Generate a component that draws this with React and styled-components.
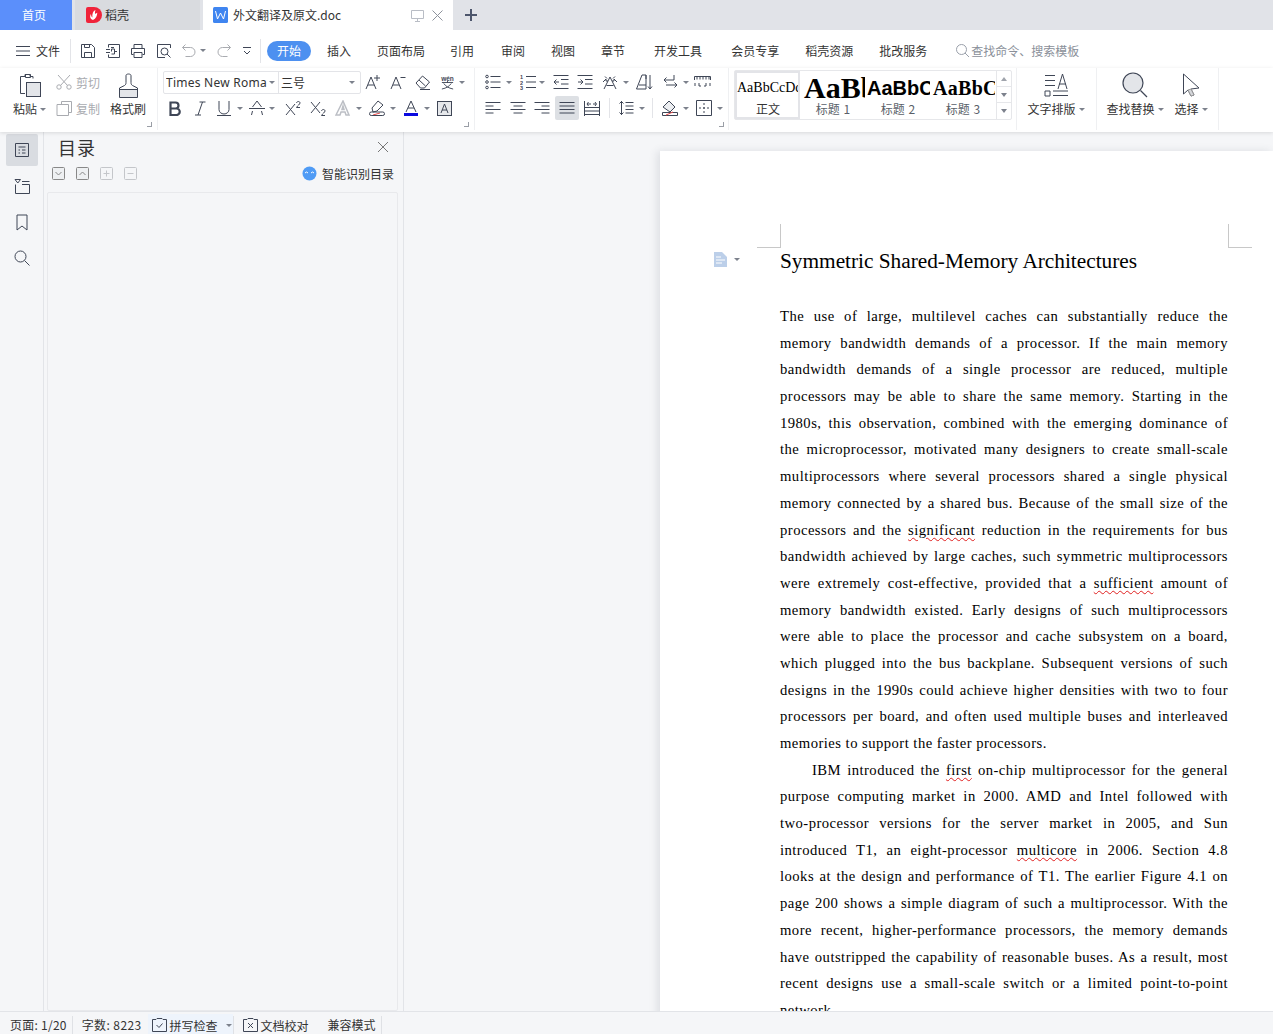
import React from "react";
import styled, { createGlobalStyle } from "styled-components";

const Global = createGlobalStyle`
  html, body { margin: 0; padding: 0; background: #f5f6f8; }
  * { box-sizing: border-box; }
  body { font-family: "Noto Sans CJK SC", "Noto Sans", sans-serif; font-size: 12px; color: #333; }
`;

const INK = "#3f4656";

const Page = styled.div`
  width: 1273px; height: 1034px; display: flex; flex-direction: column; overflow: hidden;
`;
const TabBar = styled.div`
  height: 30px; background: #e1e3e8; display: flex; align-items: stretch; flex: none;
`;
const Tab = styled.div`
  width: ${p => p.$w}px; margin-right: ${p => p.$mr || 0}px;
  background: ${p => p.$bg}; color: ${p => p.$fg || "#333"};
  display: flex; align-items: center; padding-left: ${p => p.$pl}px; gap: ${p => p.$gap || 4}px; line-height: 30px;
`;
const TabTools = styled.div`
  margin-left: auto; display: flex; align-items: center; gap: 8px; padding-right: 10px;
`;
const PlusBtn = styled.div`
  margin-left: 12px; display: flex; align-items: center;
`;
const MenuBar = styled.div`
  height: 38px; background: #fff; display: flex; align-items: center; padding: 3px 0 0 16px; flex: none; line-height: 20px;
`;
const VSep = styled.div`
  width: 1px; height: ${p => p.$h || 24}px; background: #e3e4e8; margin: 0 ${p => p.$mr || 0}px 0 ${p => p.$ml || 0}px; flex: none;
`;
const QuickBtn = styled.div`
  display: flex; align-items: center; margin-left: ${p => p.$ml || 0}px; flex: none; gap: 3px;
`;
const MenuFile = styled.span`
  margin-left: 6px;
`;
const MenuTab = styled.span`
  margin-left: ${p => p.$ml}px; flex: none;
`;
const ActiveTab = styled.span`
  width: 44px; height: 20px; border-radius: 10px; background: #4d90f0; color: #fff; text-align: center; line-height: 20px; margin-left: 6px; flex: none;
`;
const SearchHint = styled.div`
  margin-left: 28px; display: flex; align-items: center; gap: 1px; color: #8a8f99;
`;
const Ribbon = styled.div`
  height: 64px; background: #fff; display: flex; flex: none; box-shadow: 0 1px 4px rgba(0,0,0,.12); position: relative; z-index: 2;
`;
const Group = styled.div`
  position: relative; width: ${p => p.$w}px; flex: none; border-right: 1px solid #eff0f2;
  padding: 2px 0 0 ${p => p.$pl || 0}px; display: flex; height: 62px;
`;
const ToolRows = styled.div`
  display: flex; flex-direction: column; gap: 2px; width: 100%;
`;
const Corner = styled.div`
  position: absolute; right: ${p => p.$r}px; bottom: 3px; width: 5px; height: 5px;
  border-right: 1px solid #9a9ea6; border-bottom: 1px solid #9a9ea6;
`;
const BigBtn = styled.div`
  width: ${p => p.$w}px; margin-left: ${p => p.$ml || 0}px; display: flex; flex-direction: column; align-items: center; flex: none;
`;
const BigIcon = styled.div`
  height: 30px; display: flex; align-items: center; justify-content: center;
`;
const BigLabel = styled.div`
  height: 18px; line-height: 18px; display: flex; align-items: center; gap: 3px; white-space: nowrap;
`;
const SmallCol = styled.div`
  margin-left: 10px; width: 54px; display: flex; flex-direction: column; gap: 2px; flex: none;
`;
const SmallBtn = styled.div`
  height: 24px; display: flex; align-items: center; gap: 4px; color: #a9abb0;
`;
const Row = styled.div`
  height: 24px; display: flex; align-items: center; padding-left: ${p => p.$pl || 0}px; flex: none;
`;
const Tool = styled.div`
  width: ${p => p.$w}px; height: 24px; display: flex; align-items: center; gap: ${p => p.$gap || 5}px; flex: none;
`;
const ActiveTool = styled.div`
  width: 24px; height: 24px; background: #dde0e4; border-radius: 2px; display: flex; align-items: center; justify-content: center; margin-left: -4px; margin-right: 5px; flex: none;
`;
const Caret = styled.i`
  width: 0; height: 0; flex: none; border-left: 3px solid transparent; border-right: 3px solid transparent; border-top: 3px solid #7c818c; display: inline-block;
`;
const FontBox = styled.div`
  width: 198px; height: 23px; margin-left: -4px; margin-right: 4px; border: 1px solid #e3e4e8; border-radius: 2px; display: flex; align-items: center; flex: none;
`;
const FontName = styled.div`
  width: 115px; height: 21px; border-right: 1px solid #e3e4e8; display: flex; align-items: center; padding-left: 2px; gap: 2px;
  font-family: "Noto Sans", "Open Sans", sans-serif; font-size: 12px; letter-spacing: .25px;
`;
const FontNameText = styled.span`
  width: 101px; overflow: hidden; white-space: nowrap; flex: none;
`;
const FontSize = styled.div`
  flex: 1; display: flex; align-items: center; justify-content: space-between; padding: 0 5px 0 2px;
`;
const StyleBox = styled.div`
  width: 278px; height: 50px; margin-left: 5px; border: 1px solid #e6e7ea; border-radius: 2px; display: flex; flex: none;
`;
const StyleItem = styled.div`
  width: ${p => p.$w}px; height: 48px; flex: none; overflow: hidden; display: flex; flex-direction: column; align-items: center;
  border: ${p => p.$on ? "2px solid #e3e4e8" : "none"}; padding-top: ${p => p.$on ? 0 : 2}px; color: ${p => p.$on ? "#333" : "#5a5f69"};
`;
const StylePreview = styled.div`
  height: 28px; width: 100%; overflow: hidden; white-space: nowrap; line-height: 30px; text-align: left; padding-left: ${p => p.$pl || 0}px; color: #000;
  font-family: ${p => p.$sans ? '"Liberation Sans"' : '"Liberation Serif"'}, serif;
  font-size: ${p => p.$size}px; font-weight: ${p => p.$bold ? 700 : 400}; letter-spacing: ${p => p.$ls || 0}px;
`;
const StyleLabel = styled.div`
  line-height: 16px; height: 16px; word-spacing: 1px; padding-left: 1px;
`;
const Scroller = styled.div`
  margin-left: auto; width: 15px; border-left: 1px solid #e6e7ea; display: flex; flex-direction: column;
`;
const ScrollCell = styled.div`
  flex: 1; border-bottom: 1px solid ${p => p.$last ? "transparent" : "#e6e7ea"}; display: flex; align-items: center; justify-content: center;
`;
const UpCaret = styled.i`
  width: 0; height: 0; border-left: 3px solid transparent; border-right: 3px solid transparent; border-bottom: 4px solid #a0a4ac;
`;
const DownCaret = styled.i`
  width: 0; height: 0; border-left: 3px solid transparent; border-right: 3px solid transparent; border-top: 4px solid #7c818c;
`;
const Main = styled.div`
  flex: 1; min-height: 0; display: flex; overflow: hidden; background: #f5f6f8;
`;
const Rail = styled.div`
  width: 44px; flex: none; border-right: 1px solid #e2e4e8; display: flex; flex-direction: column; align-items: center; padding-top: 2px; gap: 4px;
`;
const RailItem = styled.div`
  width: 32px; height: 32px; border-radius: 2px; background: ${p => p.$on ? "#d9dce1" : "transparent"}; display: flex; align-items: center; justify-content: center;
`;
const Panel = styled.div`
  width: 360px; flex: none; border-right: 1px solid #e2e4e8; display: flex; flex-direction: column; padding: 0 5px 0 3px;
`;
const PanelHead = styled.div`
  height: 30px; display: flex; align-items: center; justify-content: space-between; padding: 0 10px 0 11px; flex: none;
`;
const PanelTitle = styled.div`
  font-size: 18px; line-height: 26px; color: #333; letter-spacing: 1px;
`;
const PanelTools = styled.div`
  height: 30px; display: flex; align-items: center; padding: 0 4px 8px 5px; gap: 11px; flex: none;
`;
const SmartLink = styled.div`
  margin-left: auto; display: flex; align-items: center; gap: 5px;
`;
const TreeBox = styled.div`
  flex: 1; border: 1px solid #e8e9ec; border-radius: 2px;
`;
const DocArea = styled.div`
  flex: 1; min-width: 0; padding: 19px 0 0 256px; overflow: hidden;
`;
const Sheet = styled.div`
  position: relative; width: 613px; height: 900px; background: #fff; box-shadow: -3px 0 8px rgba(60,65,80,.12);
  padding: 97px 45px 0 120px; color: #000; font-family: "Liberation Serif", "Times New Roman", serif; overflow: hidden;
`;
const CropMark = styled.div`
  position: absolute; top: 73px; width: 24px; height: 24px; border-bottom: 1px solid #c8c8c8;
  ${p => p.$side === "left" ? "left: 97px; border-right: 1px solid #c8c8c8;" : "left: 568px; border-left: 1px solid #c8c8c8;"}
`;
const ParaMark = styled.div`
  position: absolute; left: 54px; top: 101px; display: flex; align-items: center; gap: 7px;
`;
const DocTitle = styled.h1`
  margin: 0 0 28px; font-size: 21.33px; line-height: 27px; font-weight: 400; white-space: nowrap; letter-spacing: -.02px;
`;
const DocLine = styled.div`
  font-size: 14.67px; line-height: 26.7px; height: 26.7px; white-space: nowrap; letter-spacing: .46px;
  text-align: justify; text-align-last: ${p => p.$end ? "left" : "justify"};
  padding-left: ${p => p.$indent ? 32 : 0}px;
`;
const Spell = styled.span`
  text-decoration: underline wavy #e02020 1px; text-underline-offset: 2px;
`;
const StatusBar = styled.div`
  height: 23px; flex: none; background: #f5f6f8; border-top: 1px solid #e2e4e8; display: flex; align-items: flex-end; padding-left: 10px; position: relative; z-index: 3;
`;
const StatusText = styled.span`
  height: 20px; line-height: 18px; padding-top: 2px; margin-right: ${p => p.$mr || 0}px; white-space: nowrap; letter-spacing: ${p => p.$ls || 0}px; flex: none;
`;
const StatusSep = styled.div`
  width: 1px; height: 18px; background: #dfe1e5; margin-right: ${p => p.$mr || 0}px; flex: none;
`;
const SpellBtn = styled.div`
  width: 85px; height: 20px; padding: 2px 0 0 4px; background: #eef4fc; display: flex; align-items: center; gap: 3px; flex: none;
`;
const CaretGap = styled.span`
  width: 2px; flex: none;
`;
const CheckBtn = styled.div`
  height: 20px; padding-top: 2px; display: flex; align-items: center; gap: 3px; margin: 0 19px 0 9px; flex: none;
`;

const Svg = ({ w = 16, h = 16, vw, vh, c = INK, sw = 1, children }) => (
  <svg width={w} height={h} viewBox={`0 0 ${vw || w} ${vh || h}`} fill="none" stroke={c} strokeWidth={sw} style={{ display: "block", flex: "none" }}>{children}</svg>
);
const G = "#a9abb0";

const I = {
  burger: <Svg w={14} h={12}><path d="M0 1.5h14M0 6h14M0 10.500h14"/></Svg>,
  save: <Svg><path d="M1.500 1.500h10l3 3v10h-13z"/><path d="M4.500 14.500v-5h7v5M4.500 1.500v3h5v-3"/></Svg>,
  saveas: <Svg><path d="M3.500 4.500v-3h11v13h-11v-3M1 6.500h4M1 9.500h4"/><path d="M6.500 8.500v-2.500h3v5h-3M9.500 8.500h2.500M6 4.500h3"/></Svg>,
  print: <Svg><path d="M4 5V1.500h8V5M3.500 11.500h-2v-6h13v6h-2"/><path d="M4 9.500h8v5H4z"/></Svg>,
  preview: <Svg><path d="M14.500 5V1.500h-13v13H9"/><circle cx="8.500" cy="8.500" r="3.500"/><path d="M11 11l3.500 3.500" /></Svg>,
  undo: <Svg c={G}><path d="M4.500 1.500L1.500 4.500l3 3M1.500 4.500h8a4.500 4.500 0 010 9h-5"/></Svg>,
  redo: <Svg c={G}><path d="M11.500 1.500l3 3-3 3M14.500 4.500h-8a4.500 4.500 0 000 9h5"/></Svg>,
  more: <Svg w={10} h={10}><path d="M1 1.500h8M2 5l3 3 3-3"/></Svg>,
  search: <Svg w={15} h={15} c="#9aa0aa"><circle cx="6.500" cy="6.500" r="5"/><path d="M10 10l4 4"/></Svg>,
  monitor: <Svg w={13} h={13} c="#b9bdc5"><path d="M.5 1.500h12v8H.5zM6.500 9.500v3M4 12.500h5"/></Svg>,
  close: <Svg w={11} h={11} c="#8d929c"><path d="M.5.5l10 10M10.500.5l-10 10"/></Svg>,
  plus: <Svg w={12} h={12} c="#4d566c" sw={2}><path d="M6 0v12M0 6h12"/></Svg>,
  wps: <svg width="15" height="16" viewBox="0 0 15 16" style={{ display: "block", flex: "none" }}><rect width="15" height="16" rx="1.500" fill="#3f85f0"/><path d="M2.500 4l2 8 3-6 3 6 2-8" fill="none" stroke="#fff" strokeWidth="1"/></svg>,
  daoke: <svg width="16" height="16" viewBox="0 0 16 16" style={{ display: "block", flex: "none" }}><path d="M0 2a2 2 0 012-2h6a8 8 0 010 16H2a2 2 0 01-2-2z" fill="#f0233a"/><path d="M7 13c-3-1-3.500-4-2-6 0 2 .6 3 1.400 3.600C6 7 7 4 9.500 3c-.8 2.500-.5 3.500 0 4 .7-.7 1-1 1.800-1.300-.2 3-1.300 6-4.300 7.300z" fill="#fff"/></svg>,
  paste: <svg width="22" height="25" viewBox="0 0 22 25" fill="none" stroke={INK} style={{ display: "block" }}><path d="M14 5.500V3.500h-3v-2H6v2H1.500v17H6"/><path d="M6.500 1.500h5v3h-5z"/><rect x="7.500" y="9.500" width="14" height="14" fill="#e3e5e9"/></svg>,
  cut: <Svg c={G}><circle cx="3" cy="13" r="2.200"/><circle cx="13" cy="13" r="2.200"/><path d="M4.500 11.500L14 1M11.500 11.500L2 1"/></Svg>,
  copy: <Svg c={G}><path d="M5.500 4.500v-3h10v11h-3"/><path d="M1 4.500h11.500v11H1z" fill="#fff"/></Svg>,
  brush: <svg width="19" height="25" viewBox="0 0 19 25" fill="none" stroke={INK} style={{ display: "block" }}><path d="M.5 16.500h18v8H.5z" fill="#e3e5e9"/><path d="M.5 24V15l5-2.500c1.500-1 1.500-2 1.500-3V2.500c0-2 5-2 5 0v7c0 1 0 2 1.500 3l5 2.500v9"/></svg>,
  aplus: <Svg w={16}><path d="M1 15L6 3l5 12M3 11h6M12 1v6M9 4h6"/></Svg>,
  aminus: <Svg w={16}><path d="M1 15L6 3l5 12M3 11h6M10.500 3.500h5"/></Svg>,
  eraser: <Svg><path d="M1 9l6.500-7 7 6-5 6H5.500z"/><path d="M4 6l6.500 6" /><path d="M5 15.500h10"/></Svg>,
  wen: <svg width="16" height="16" viewBox="0 0 16 16" style={{ display: "block" }}><text x="8" y="6.500" fontSize="7" fontFamily="Liberation Sans" fontWeight="700" fill={INK} textAnchor="middle">wén</text><path d="M2 8.500h12M8 7v2M4 9.500c2 3 5 5 10 6M12 9.500c-2 3-5 5-10 6" stroke={INK} fill="none"/></svg>,
  bold: <Svg sw={2.200}><path d="M3.500 2.500h5a3 3 0 010 6h-5zM3.500 8.500h6a3.200 3.200 0 010 6.500h-6z"/></Svg>,
  italic: <Svg><path d="M10.500 2L6 15M7.500 2h6M3 15h6" /></Svg>,
  underline: <Svg><path d="M3 1v8.500a5 4.500 0 0010 0V1M1 15.500h14"/></Svg>,
  strike: <Svg><path d="M3.500 7L8 1l4.500 6M0 8.500h16M3.500 11l-1 4M12.500 11l1 4" /></Svg>,
  sup: <Svg><path d="M1 4l9 11M10 4l-9 11"/><path d="M11.500 3c.3-2 3.500-2 3.500 0 0 1.300-2.500 2.500-3.500 4.500H15" /></Svg>,
  sub: <Svg><path d="M1 2l9 11M10 2l-9 11"/><path d="M11.500 11c.3-2 3.500-2 3.500 0 0 1.300-2.500 2.500-3.500 4.500H15" /></Svg>,
  aout: <Svg c="#bcbfc5" sw={1.500}><path d="M1 15L8 1l6 14h-3l-1-3H6l-1 3zM7 9.500h2L8 6z"/></Svg>,
  high: <Svg><path d="M3 8l6-7 5 4-6 6-4 1z"/><path d="M4 15l7-2" stroke="#e84b4b"/><rect x=".5" y="12" width="15" height="3.500" rx="1.700" /></Svg>,
  ablue: <svg width="16" height="16" viewBox="0 0 16 16" fill="none" stroke={INK} style={{ display: "block" }}><path d="M3 12L8 1l5 11M5 8h6"/><rect x="1" y="13" width="14" height="3" fill="#0a0ae0" stroke="none"/></svg>,
  abox: <Svg w={15} h={15}><rect x=".5" y=".5" width="14" height="14" fill="#e6e8eb"/><path d="M4 12L7.500 3 11 12M5 9h5"/></Svg>,
  bullets: <Svg><path d="M5.500 2.500h10M5.500 8h10M5.500 13.500h10"/><circle cx="2" cy="2.500" r="1.300"/><circle cx="2" cy="8" r="1.300"/><circle cx="2" cy="13.500" r="1.300"/></Svg>,
  numbers: <svg width="16" height="16" viewBox="0 0 16 16" fill="none" stroke={INK} style={{ display: "block" }}><path d="M6 2.500h10M6 8h10M6 13.500h10"/><text x="0" y="5" fontSize="5.500" fontWeight="700" fontFamily="Liberation Sans" fill={INK} stroke="none">1</text><text x="0" y="10.500" fontSize="5.500" fontWeight="700" fontFamily="Liberation Sans" fill={INK} stroke="none">2</text><text x="0" y="16" fontSize="5.500" fontWeight="700" fontFamily="Liberation Sans" fill={INK} stroke="none">3</text></svg>,
  outdent: <Svg><path d="M.5 1.500h15M8 5.500h7.500M8 10h7.500M.5 14.500h15M6 8H1M3.500 5.500L1 8l2.500 2.500"/></Svg>,
  indent: <Svg><path d="M.5 1.500h15M8 5.500h7.500M8 10h7.500M.5 14.500h15M1 8h5M3.500 5.500L6 8l-2.500 2.500"/></Svg>,
  layout: <Svg><path d="M1 8l3-3v2h2M15 8l-3-3v2h-2M8 3L2 15M8 3l6 12M4.500 11.500h7M3 2.500l2 2M13 2.500l-2 2"/></Svg>,
  sort: <Svg w={17} h={16}><path d="M.5 15L6 1h4v14zM3 11h7M10 5v-4"/><path d="M14 1v14M12 12.500l2 2.500 2-2.500"/></Svg>,
  lbreak: <Svg><path d="M12 1v5H2M4.500 3.500L2 6l2.500 2.500M4 11h11M12.500 8.500L15 11l-2.500 2.500"/></Svg>,
  ruler: <Svg w={17} h={16} vw={17} vh={16}><path d="M.5 6V2.500h16V6M3 2.500v3M6 2.500v3M9 2.500v3M12 2.500v3M15 2.500v3M1 9v3M5 9v3h2M10 12h2v-3M16 9v3"/></Svg>,
  left: <Svg><path d="M.5 2.500h15M.5 6h8M.5 9.500h15M.5 13h8"/></Svg>,
  center: <Svg><path d="M.5 2.500h15M3.500 6h9M.5 9.500h15M3.500 13h9"/></Svg>,
  right: <Svg><path d="M.5 2.500h15M7.500 6h8M.5 9.500h15M7.500 13h8"/></Svg>,
  justify: <Svg><path d="M.5 2.500h15M.5 6h15M.5 9.500h15M.5 13h15"/></Svg>,
  dist: <Svg><path d="M.5 1v15M15.500 1v15M.5 7.500h15M.5 11h15M.5 14.500h15M3 4h4M12 4H9M4.500 2L3 4l1.500 2M11 2l1.500 2L11 6"/></Svg>,
  spacing: <Svg><path d="M3.500 1v14M1.500 3.500l2-2 2 2M1.500 12.500l2 2 2-2M7.500 2.500h8M7.500 6h8M7.500 9.500h8M7.500 13h8"/></Svg>,
  shade: <Svg><path d="M1 7l6-6 6 6-5 5z" fill="#eceef1"/><path d="M.5 12.500h15v3H.5z" /><path d="M4 15l7-3" stroke="#e84b4b"/></Svg>,
  border: <Svg><path d="M.5.5h15v15H.5z"/><path d="M8 3v2M8 7v2M8 11v2M3 8h2M7 8h2M11 8h2"/></Svg>,
  txtlayout: <svg width="25" height="24" viewBox="0 0 25 24" fill="none" stroke={INK} style={{ display: "block" }}><path d="M1 2.500h10M1 7.500h10M1 12.500h10M14 16L18.500 1 23 16M15 11h7M1 18h5v5H1zM9 18h15M9 22.500h15"/></svg>,
  find: <svg width="26" height="26" viewBox="0 0 26 26" fill="none" stroke={INK} strokeWidth="1.200" style={{ display: "block" }}><circle cx="11" cy="11" r="10" fill="#e3e5e9"/><path d="M18.500 18.500l6.500 6.500"/></svg>,
  cursor: <svg width="17" height="25" viewBox="0 0 17 25" fill="none" stroke={INK} style={{ display: "block" }}><path d="M.5 1v20l4.500-4 3 6 3-1-3-6 8-1z" fill="#fff"/><path d="M5 17l3 6 3-1-3-6z" fill="#d5d7db" stroke="#999"/></svg>,
  outline: <Svg><path d="M1.500 1.500h13v13h-13zM4.500 5h7M8 8h3.500M8 11h3.500M4.500 8h1.500M4.500 11h1.500"/></Svg>,
  folder: <Svg w={16} h={16}><path d="M1.500 6.500v9h14v-9M8 6.500h7.500M8 3.500h7.500"/><path d="M1 1.500h5.500L3.800 5z" /></Svg>,
  bookmark: <Svg w={12} h={17}><path d="M1 1h10v15l-5-4-5 4z"/></Svg>,
  rsearch: <Svg><circle cx="6.500" cy="6.500" r="5.500"/><path d="M10.500 10.500l5 5"/></Svg>,
  x: <Svg w={10} h={10} c="#777"><path d="M0 0l10 10M10 0L0 10"/></Svg>,
  chkDown: <Svg w={13} h={13} c="#888"><rect x=".5" y=".5" width="12" height="12" rx="1" fill="#eef0f2"/><path d="M3.500 5l3 3 3-3"/></Svg>,
  chkUp: <Svg w={13} h={13} c="#888"><rect x=".5" y=".5" width="12" height="12" rx="1" fill="#eef0f2"/><path d="M3.500 8l3-3 3 3"/></Svg>,
  chkPlus: <Svg w={13} h={13} c="#c4c6ca"><rect x=".5" y=".5" width="12" height="12" rx="1"/><path d="M3.500 6.500h6M6.500 3.500v6"/></Svg>,
  chkMinus: <Svg w={13} h={13} c="#c4c6ca"><rect x=".5" y=".5" width="12" height="12" rx="1"/><path d="M3.500 6.500h6"/></Svg>,
  smart: <svg width="15" height="15" viewBox="0 0 15 15" style={{ display: "block", flex: "none" }}><circle cx="7.500" cy="7.500" r="7" fill="#4f9bf5"/><path d="M3 7l1.500-1L6 7M9 7l1.500-1L12 7" stroke="#fff" fill="none"/></svg>,
  paraMark: <svg width="13" height="15" viewBox="0 0 13 15" style={{ display: "block" }}><path d="M0 0h8l5 5v10H0z" fill="#bccfe9"/><path d="M2 5h5M2 8h9M2 11h6" stroke="#fff"/></svg>,
  spellChk: <Svg w={15} h={14}><path d="M.5 1.500h3.500l1-1h5l1 1h3.500v12H.5zM4.500 7l2.500 2.500 3.500-4"/></Svg>,
  docChk: <Svg w={15} h={14}><path d="M.5 1.500h3.500l1-1h5l1 1h3.500v12H.5zM5 5l5 5M10 5l-5 5"/></Svg>,
};

const ToolItem = ({ w, icon, caret, gap }) => (
  <Tool $w={w} $gap={gap}>{I[icon]}{caret && <Caret />}</Tool>
);

const LINES_A = [
  <>The use of large, multilevel caches can substantially reduce the</>,
  <>memory bandwidth demands of a processor. If the main memory</>,
  <>bandwidth demands of a single processor are reduced, multiple</>,
  <>processors may be able to share the same memory. Starting in the</>,
  <>1980s, this observation, combined with the emerging dominance of</>,
  <>the microprocessor, motivated many designers to create small-scale</>,
  <>multiprocessors where several processors shared a single physical</>,
  <>memory connected by a shared bus. Because of the small size of the</>,
  <>processors and the <Spell>significant</Spell> reduction in the requirements for bus</>,
  <>bandwidth achieved by large caches, such symmetric multiprocessors</>,
  <>were extremely cost-effective, provided that a <Spell>sufficient</Spell> amount of</>,
  <>memory bandwidth existed. Early designs of such multiprocessors</>,
  <>were able to place the processor and cache subsystem on a board,</>,
  <>which plugged into the bus backplane. Subsequent versions of such</>,
  <>designs in the 1990s could achieve higher densities with two to four</>,
  <>processors per board, and often used multiple buses and interleaved</>,
];
const LINES_B = [
  <>purpose computing market in 2000. AMD and Intel followed with</>,
  <>two-processor versions for the server market in 2005, and Sun</>,
  <>introduced T1, an eight-processor <Spell>multicore</Spell> in 2006. Section 4.8</>,
  <>looks at the design and performance of T1. The earlier Figure 4.1 on</>,
  <>page 200 shows a simple diagram of such a multiprocessor. With the</>,
  <>more recent, higher-performance processors, the memory demands</>,
  <>have outstripped the capability of reasonable buses. As a result, most</>,
  <>recent designs use a small-scale switch or a limited point-to-point</>,
];

export default function App() {
  return (
    <Page>
      <Global />
      <TabBar>
        <Tab $w={72} $mr={3} $bg="#5b8ffb" $fg="#fff" $pl={22}>首页</Tab>
        <Tab $w={125} $mr={3} $bg="#d9dbdf" $pl={11} $gap={3}>{I.daoke}稻壳</Tab>
        <Tab $w={250} $bg="#fff" $pl={10} $gap={5}>
          {I.wps}外文翻译及原文.doc
          <TabTools>{I.monitor}{I.close}</TabTools>
        </Tab>
        <PlusBtn>{I.plus}</PlusBtn>
      </TabBar>

      <MenuBar>
        {I.burger}
        <MenuFile>文件</MenuFile>
        <VSep $ml={10} />
        <QuickBtn $ml={9}>{I.save}</QuickBtn>
        <QuickBtn $ml={9}>{I.saveas}</QuickBtn>
        <QuickBtn $ml={9}>{I.print}</QuickBtn>
        <QuickBtn $ml={10}>{I.preview}</QuickBtn>
        <QuickBtn $ml={9}>{I.undo}<Caret /></QuickBtn>
        <QuickBtn $ml={10}>{I.redo}</QuickBtn>
        <QuickBtn $ml={10}>{I.more}</QuickBtn>
        <VSep $ml={8} />
        <ActiveTab>开始</ActiveTab>
        <MenuTab $ml={16}>插入</MenuTab>
        <MenuTab $ml={26}>页面布局</MenuTab>
        <MenuTab $ml={25}>引用</MenuTab>
        <MenuTab $ml={27}>审阅</MenuTab>
        <MenuTab $ml={26}>视图</MenuTab>
        <MenuTab $ml={26}>章节</MenuTab>
        <MenuTab $ml={29}>开发工具</MenuTab>
        <MenuTab $ml={29}>会员专享</MenuTab>
        <MenuTab $ml={26}>稻壳资源</MenuTab>
        <MenuTab $ml={26}>批改服务</MenuTab>
        <SearchHint>{I.search}查找命令、搜索模板</SearchHint>
      </MenuBar>

      <Ribbon>
        <Group $w={158} $pl={13}>
          <BigBtn $w={33}>
            <BigIcon>{I.paste}</BigIcon>
            <BigLabel>粘贴<Caret /></BigLabel>
          </BigBtn>
          <SmallCol>
            <SmallBtn>{I.cut}剪切</SmallBtn>
            <SmallBtn>{I.copy}复制</SmallBtn>
          </SmallCol>
          <BigBtn $w={36}>
            <BigIcon>{I.brush}</BigIcon>
            <BigLabel>格式刷</BigLabel>
          </BigBtn>
          <Corner $r={5} />
        </Group>

        <Group $w={317}>
          <ToolRows>
            <Row $pl={9}>
              <FontBox>
                <FontName><FontNameText>Times New Roman</FontNameText><Caret /></FontName>
                <FontSize>三号<Caret /></FontSize>
              </FontBox>
              <ToolItem w={25} icon="aplus" />
              <ToolItem w={25} icon="aminus" />
              <ToolItem w={25} icon="eraser" />
              <ToolItem w={25} icon="wen" caret gap={4} />
            </Row>
            <Row $pl={9}>
              <ToolItem w={25} icon="bold" />
              <ToolItem w={24} icon="italic" />
              <ToolItem w={33} icon="underline" caret />
              <ToolItem w={36} icon="strike" caret gap={4} />
              <ToolItem w={25} icon="sup" />
              <ToolItem w={25} icon="sub" />
              <ToolItem w={34} icon="aout" caret />
              <ToolItem w={34} icon="high" caret />
              <ToolItem w={34} icon="ablue" caret />
              <ToolItem w={16} icon="abox" />
            </Row>
          </ToolRows>
          <Corner $r={5} />
        </Group>

        <Group $w={254}>
          <ToolRows>
            <Row $pl={10}>
              <ToolItem w={35} icon="bullets" caret />
              <ToolItem w={33} icon="numbers" caret gap={3} />
              <ToolItem w={24} icon="outdent" />
              <ToolItem w={25} icon="indent" />
              <ToolItem w={34} icon="layout" caret />
              <ToolItem w={26} icon="sort" />
              <ToolItem w={32} icon="lbreak" caret />
              <ToolItem w={17} icon="ruler" />
            </Row>
            <Row $pl={10}>
              <ToolItem w={25} icon="left" />
              <ToolItem w={24} icon="center" />
              <ToolItem w={25} icon="right" />
              <ActiveTool>{I.justify}</ActiveTool>
              <ToolItem w={25} icon="dist" />
              <VSep $h={20} $mr={8} />
              <ToolItem w={34} icon="spacing" caret />
              <VSep $h={20} $mr={9} />
              <ToolItem w={34} icon="shade" caret />
              <ToolItem w={26} icon="border" caret />
            </Row>
          </ToolRows>
          <Corner $r={4} />
        </Group>

        <Group $w={288}>
          <StyleBox>
            <StyleItem $w={65} $on>
              <StylePreview $size={14}>AaBbCcDd</StylePreview>
              <StyleLabel>正文</StyleLabel>
            </StyleItem>
            <StyleItem $w={65}>
              <StylePreview $size={30} $bold $pl={4}>AaBb</StylePreview>
              <StyleLabel>标题 1</StyleLabel>
            </StyleItem>
            <StyleItem $w={65}>
              <StylePreview $size={20} $bold $sans $pl={2}>AaBbC</StylePreview>
              <StyleLabel>标题 2</StyleLabel>
            </StyleItem>
            <StyleItem $w={65}>
              <StylePreview $size={20} $bold $pl={3} $ls={.3}>AaBbC</StylePreview>
              <StyleLabel>标题 3</StyleLabel>
            </StyleItem>
            <Scroller>
              <ScrollCell><UpCaret /></ScrollCell>
              <ScrollCell><DownCaret /></ScrollCell>
              <ScrollCell $last><DownCaret /></ScrollCell>
            </Scroller>
          </StyleBox>
        </Group>

        <Group $w={80} $pl={9}>
          <BigBtn $w={60}>
            <BigIcon>{I.txtlayout}</BigIcon>
            <BigLabel>文字排版<Caret /></BigLabel>
          </BigBtn>
        </Group>

        <Group $w={122} $pl={11}>
          <BigBtn $w={54}>
            <BigIcon>{I.find}</BigIcon>
            <BigLabel>查找替换<Caret /></BigLabel>
          </BigBtn>
          <BigBtn $w={34} $ml={12}>
            <BigIcon>{I.cursor}</BigIcon>
            <BigLabel>选择<Caret /></BigLabel>
          </BigBtn>
        </Group>
      </Ribbon>

      <Main>
        <Rail>
          <RailItem $on>{I.outline}</RailItem>
          <RailItem>{I.folder}</RailItem>
          <RailItem>{I.bookmark}</RailItem>
          <RailItem>{I.rsearch}</RailItem>
        </Rail>
        <Panel>
          <PanelHead>
            <PanelTitle>目录</PanelTitle>
            {I.x}
          </PanelHead>
          <PanelTools>
            {I.chkDown}{I.chkUp}{I.chkPlus}{I.chkMinus}
            <SmartLink>{I.smart}智能识别目录</SmartLink>
          </PanelTools>
          <TreeBox />
        </Panel>
        <DocArea>
          <Sheet>
            <CropMark $side="left" />
            <CropMark $side="right" />
            <ParaMark>{I.paraMark}<Caret /></ParaMark>
            <DocTitle>Symmetric Shared-Memory Architectures</DocTitle>
            {LINES_A.map((l, i) => <DocLine key={i}>{l}</DocLine>)}
            <DocLine $end>memories to support the faster processors.</DocLine>
            <DocLine $indent>IBM introduced the <Spell>first</Spell> on-chip multiprocessor for the general</DocLine>
            {LINES_B.map((l, i) => <DocLine key={i}>{l}</DocLine>)}
            <DocLine $end>network.</DocLine>
          </Sheet>
        </DocArea>
      </Main>

      <StatusBar>
        <StatusText $mr={5} $ls={.25}>页面: 1/20</StatusText>
        <StatusSep $mr={9} />
        <StatusText $mr={6} $ls={.4}>字数: 8223</StatusText>
        <SpellBtn>{I.spellChk}拼写检查<CaretGap /><Caret /></SpellBtn>
        <StatusSep />
        <CheckBtn>{I.docChk}文档校对</CheckBtn>
        <StatusText $mr={5}>兼容模式</StatusText>
        <StatusSep />
      </StatusBar>
    </Page>
  );
}
